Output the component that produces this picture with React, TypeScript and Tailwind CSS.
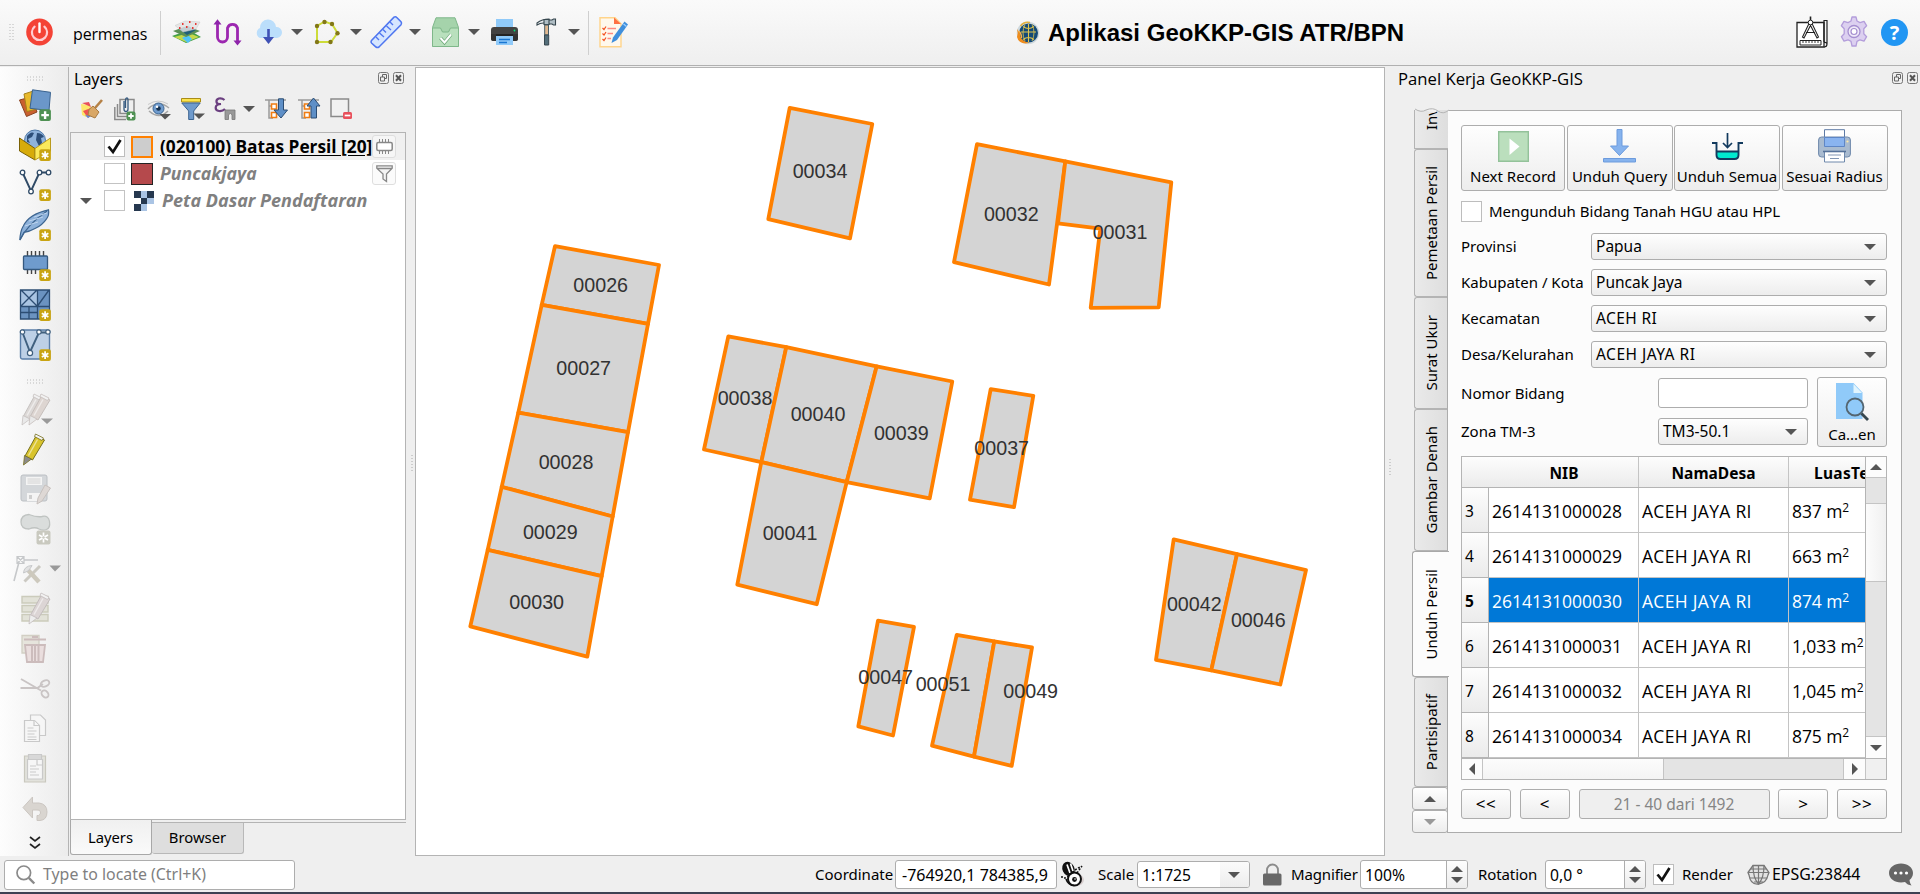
import React from "react";

type Kids = { children?: React.ReactNode };

/* ---------- small shared pieces ---------- */

function Ico({ w = 32, h = 32, vb, cls = "", children }: Kids & { w?: number; h?: number; vb?: string; cls?: string }) {
  return (
    <svg width={w} height={h} viewBox={vb ?? `0 0 ${w} ${h}`} className={`block shrink-0 overflow-visible ${cls}`} fill="none">
      {children}
    </svg>
  );
}

function Tri({ cls = "", up = false, color = "#555" }: { cls?: string; up?: boolean; color?: string }) {
  return (
    <Ico w={12} h={6} cls={cls}>
      <path d={up ? "M0 6 6 0l6 6z" : "M0 0h12L6 6z"} fill={color} />
    </Ico>
  );
}

function Check() {
  return (
    <Ico w={19} h={19}>
      <path d="M3.500 9.500 8 15 15.500 3" stroke="#111" strokeWidth="2.700" />
    </Ico>
  );
}

function DockButtons() {
  return (
    <div className="flex gap-[4px]">
      <Ico w={11} h={12}>
        <rect x=".5" y=".5" width="10" height="11" rx="2" stroke="#777" />
        <path d="M4.500 5V2.500h4v4H6.500M2.500 5h4v4h-4z" stroke="#666" />
      </Ico>
      <Ico w={11} h={12}>
        <rect x=".5" y=".5" width="10" height="11" rx="2" stroke="#777" />
        <path d="m3 3.300 5 5.400M8 3.300 3 8.700" stroke="#555" strokeWidth="2" />
      </Ico>
    </div>
  );
}

const Star = () => (
  <g>
    <rect x="20.300" y="20.300" width="11.600" height="11.600" rx="2" fill="#c9a412" />
    <path d="M26.100 22.300v7.600M22.800 24.200l6.600 3.800M29.400 24.200l-6.600 3.800" stroke="#fff" strokeWidth="1.700" />
  </g>
);

/* ---------- top toolbar ---------- */

function TopBar() {
  return (
    <header className="flex h-[66px] shrink-0 items-start border-b border-[#b0b0b0] bg-gradient-to-b from-[#fafafa] to-[#efefef] pt-[16px]">
      <Ico w={5} h={18} cls="mt-[8px] ml-[9px]">
        <path d="M1 0v18M4 0v18" stroke="#b8b8b8" strokeWidth="1" strokeDasharray="1 2" />
      </Ico>
      <Ico w={27} h={28} cls="mt-[2px] ml-[12px]">
        <ellipse cx="13.500" cy="14" rx="13.300" ry="13.600" fill="#f44336" />
        <path d="M8.600 8.600a7.600 7.600 0 1 0 9.800 0" stroke="#ffcdd2" strokeWidth="2.200" strokeLinecap="round" />
        <path d="M13.500 5.500v8.500" stroke="#fff" strokeWidth="2.400" strokeLinecap="round" />
      </Ico>
      <span className="mt-[5px] ml-[20px] w-[88px] font-['Open_Sans',sans-serif] text-[16px] leading-[26px] tracking-[-0.150px]">permenas</span>
      <div className="-mt-[5px] -ml-px h-[44px] w-px bg-[#cfcfcf]" />
      <Ico w={29} h={26} cls="mt-[3px] ml-[11px]">
        <path d="M0 17 17 11l12 7-15 6z" fill="#43a047" />
        <path d="M2 18 17 14l10 4-13 5z" fill="#c6d84a" />
        <path d="m10 19 6-3 4 4-4 4z" fill="#4fc3f7" />
        <path d="M1 12 15 7l13 5-14 6z" fill="#5b8f55" />
        <path d="m7 10 9-3 8 4-9 5z" fill="#1f5f7a" />
        <path d="M3 6.500 13 2l15 1-4 7-13 3z" fill="#e3e3e3" fillOpacity=".85" stroke="#c9c9c9" strokeWidth=".5" />
        <path d="M10 5h1.500M17 3h1.500M23 5h1.500M14 8h1.500M20 9h1.500M7 9h1.500" stroke="#e53935" strokeWidth="1.800" />
      </Ico>
      <Ico w={29} h={28} cls="mt-[3px] ml-[12px]">
        <path d="M4.500 3v15a5 5 0 0 0 10 0V9a5.300 5.300 0 0 1 10 0v14" stroke="#9c27b0" strokeWidth="2.800" />
        <path d="M.5 5.500 4.500.2l4 5.300zM20.500 21.500h8l-4 5z" fill="#8e24aa" />
      </Ico>
      <Ico w={27} h={26} cls="mt-[4px] ml-[13px]">
        <path d="M5 18a5.500 5.500 0 0 1 0-10 8 8 0 0 1 16-1 5.500 5.500 0 0 1 1 11z" fill="#bbdefb" />
        <path d="M13.500 9v10" stroke="#3f51b5" strokeWidth="2.600" />
        <path d="M8 17h11l-5.500 7z" fill="#3f51b5" />
      </Ico>
      <Tri cls="mt-[13px] ml-[9px]" />
      <Ico w={25} h={26} cls="mt-[4px] ml-[12px]">
        <path d="M2 22V6l7.500-4.500L17 4l5.500 9-6.500 9z" stroke="#cddc39" strokeWidth="2" />
        <g fill="#827717">
          <circle cx="2" cy="6" r="2.200" /><circle cx="9.500" cy="2" r="2.200" /><circle cx="17" cy="4" r="2.200" />
          <circle cx="22.500" cy="13.300" r="2.200" /><circle cx="15.500" cy="22" r="2.200" /><circle cx="2" cy="22" r="2.200" />
        </g>
      </Ico>
      <Tri cls="mt-[13px] ml-[10px]" />
      <Ico w={33} h={32} cls="ml-[8px]">
        <path d="M1.500 24.500 24 1.200q1.500-1 3 .5l4 4q1.200 1.500 0 3L9 31q-1.500 1-3 0l-4.500-4q-1-1 0-2.500z" fill="#d6e6ff" stroke="#5077f0" strokeWidth="1.600" />
        <path d="m6 21 3 3M9.500 17l4.500 4M13 13.500l3 3M16.500 10l4.500 4M20 6l3 3" stroke="#5077f0" strokeWidth="1.400" />
      </Ico>
      <Tri cls="mt-[13px] ml-[6px]" />
      <Ico w={27} h={31} cls="mt-[1px] ml-[11px]">
        <path d="M.5 10.500 4 .8h19l3.500 9.700v18.700H.5z" fill="#a5d3ab" stroke="#7fb78a" />
        <path d="M.5 11h8l2 4h6l2-4h8v18.500H.5z" fill="#b9e0bd" stroke="#7fb78a" />
        <path d="m8.500 21 4 4.500 6.500-8" stroke="#6fa87a" strokeWidth="3.500" />
        <path d="m8.500 21 4 4.500 6.500-8" stroke="#fff" strokeWidth="2" />
      </Ico>
      <Tri cls="mt-[13px] ml-[9px]" />
      <Ico w={27} h={27} cls="mt-[3px] ml-[11px]">
        <path d="M5 0h17v9H5z" fill="#90caf9" />
        <rect y="8" width="27" height="14" rx="3" fill="#424242" />
        <path d="M0 15h27v5q0 2-2 2H2q-2 0-2-2z" fill="#333" />
        <path d="M5 15h17v11H5z" fill="#90caf9" />
        <path d="M5 15h17v2H5z" fill="#242424" />
        <path d="M8 20.500h11M8 23.500h8" stroke="#1976d2" strokeWidth="1.500" />
        <circle cx="23.500" cy="11.500" r=".9" fill="#00e676" />
      </Ico>
      <Ico w={20} h={28} cls="mt-[2px] ml-[18px]">
        <path d="M1 5q5-4 12-4v5Q6 3.500 1 7z" fill="#eceff1" stroke="#37474f" strokeWidth="1.100" />
        <path d="M8 1.500h5v5H8zM13 2h3l1.500-1h2v6h-2L16 6h-3z" fill="#b0bec5" stroke="#37474f" strokeWidth="1.100" />
        <path d="M8.700 7h3.800v10H8.700z" fill="#e0b890" stroke="#455a64" />
        <path d="M8.500 17h4.200v10H8.500z" fill="#546e7a" stroke="#37474f" />
      </Ico>
      <Tri cls="mt-[13px] ml-[12px]" />
      <div className="-mt-[5px] ml-[8px] h-[44px] w-px bg-[#cfcfcf]" />
      <Ico w={30} h={31} cls="mt-[1px] ml-[10px]">
        <path d="M1 .8h15l6 6v23H1z" fill="#fff8ec" stroke="#ffd48a" strokeWidth="1.400" />
        <path d="M15 .5 22 7h-7z" fill="#ff7043" />
        <path d="m3.500 11 1.500 1.500L7 9.500M3.500 16.500 5 18l2-3M3.500 22 5 23.500l2-3" stroke="#f4511e" strokeWidth="1.200" />
        <path d="M8.500 11.500H17M8.500 16.500H14M8.500 21.500H12" stroke="#ff8a80" strokeWidth="1.500" />
        <path d="M25.500 4.500 29 7.500 18 23l-5.500 3 1.500-5.500z" fill="#3f8fdc" />
        <path d="m24.500 7 3 2.500" stroke="#9fd0ff" strokeWidth="1.200" />
      </Ico>
      <div className="ml-[387px] flex">
        <Ico w={23} h={24} cls="mt-[5px]">
          <circle cx="12" cy="12" r="11.300" fill="#cfd8dc" />
          <circle cx="12.500" cy="12" r="9.500" fill="#134a78" />
          <path d="M5 11h15M12.500 3v18M7 5.500q5.500 4 11 0M7 18.500q5.500-4 11 0" stroke="#e2c64e" strokeWidth="1.100" />
          <path d="M9 3.500q-4 8 0 16.500M16 3.500q4 8 0 16.500" stroke="#e2c64e" strokeWidth=".8" />
          <path d="M4.500 5Q8 0 14 1.500" stroke="#e2b23e" strokeWidth="1.500" />
          <path d="M1 8q4 5 3.500 8 2 4.500 9 6-10.500 2-12.500-6 1.500-4 0-8z" fill="#ef8c1c" />
          <path d="M3 10q3 4 2.500 7" stroke="#f8b24a" strokeWidth="1.300" />
        </Ico>
        <h1 className="ml-[9px] w-[748px] font-['Liberation_Sans',sans-serif] text-[24px] leading-[34px] font-bold whitespace-nowrap">
          Aplikasi GeoKKP-GIS ATR/BPN
        </h1>
      </div>
      <Ico w={32} h={33}>
        <path d="M1 6.500h27V31H1z" fill="#fff" stroke="#222" strokeWidth="1.300" />
        <path d="M28 31q3 0 3-3V4.500h-3V26M28 26.500q3-.5 3 2" stroke="#222" strokeWidth="1.200" />
        <path d="M4 24.500h21v4.500H4z" fill="#fff" stroke="#222" />
        <path d="M7 24.500v2.500M10 24.500v2.500M13 24.500v2.500M16 24.500v2.500M19 24.500v2.500M22 24.500v2.500" stroke="#222" strokeWidth=".9" />
        <path d="M13 7.500 6.500 21l1.500 1 6.500-12.500L21 22l1.500-1L16 7.500zM10 16.500h9" fill="#fff" stroke="#222" strokeWidth="1.100" />
        <circle cx="14.500" cy="6.500" r="2.300" fill="#fff" stroke="#222" />
        <path d="M14.500 4V.5" stroke="#222" strokeWidth="1.600" />
      </Ico>
      <Ico w={28} h={32} cls="ml-[12px]">
        <path
          d="M12 1h4l1 4 3 1.600 4-1.300 2.600 4.400-2.800 3v5l2.800 3-2.600 4.400-4-1.300-3 1.600-1 4.600h-4l-1-4.600-3-1.600-4 1.300-2.600-4.400 2.800-3v-5l-2.800-3L4 5.300l4 1.300L11 5z"
          fill="#dcd0f0" stroke="#b39ddb" strokeWidth="1.300" strokeLinejoin="round"
        />
        <circle cx="14" cy="15.500" r="6" fill="#f0eaf8" stroke="#a58fd0" strokeWidth="1.300" />
        <circle cx="14" cy="15.500" r="3" fill="#fff" stroke="#a58fd0" strokeWidth="1.200" />
      </Ico>
      <div className="mt-[3px] ml-[13px] flex h-[27px] w-[27px] items-center justify-center rounded-full bg-[#2196f3] font-['Open_Sans',sans-serif] text-[20px] font-bold text-white">
        ?
      </div>
    </header>
  );
}

/* ---------- left vertical toolbar ---------- */

const slots: React.ReactNode[] = [
  <g key="a">
    <path d="M.5 11 12 8l6 15-10.500 4.500z" fill="#c9602f" stroke="#8a4220" />
    <path d="m5 5 11-3.500 4 18-12 3z" fill="#e8b92c" stroke="#a5821b" />
    <path d="m13.500.8 18 2.500L30 21.500l-19-2.200z" fill="#6b97c9" stroke="#3a6390" />
    <rect x="20.300" y="20.300" width="11.600" height="11.600" rx="2" fill="#4f9153" />
    <path d="M26.100 22.300v7.600M22.300 26.100h7.600" stroke="#fff" strokeWidth="2.400" />
  </g>,
  <g key="b">
    <circle cx="16" cy="11.500" r="10.500" fill="#8fb3dc" stroke="#4f79a8" />
    <path d="M8 7q4-5 7-3l-2 4-4 2 2 4-3-1zM18 4q5 0 7 4l-3 1 1 5-3 3-3-6z" fill="#2d4f7a" />
    <path d="M.5 9 16 19.500V31L.5 22z" fill="#d7ab0a" stroke="#7a6105" />
    <path d="M16 19.500 31.500 9v13L16 31z" fill="#fbe95b" stroke="#b99a1d" />
    <Star />
  </g>,
  <g key="c">
    <path d="M3.500 3.500 12 22 20.500 3.500H30" stroke="#2f4a66" strokeWidth="1.900" />
    <g fill="#fff" stroke="#2f4a66" strokeWidth="1.300">
      <circle cx="3.500" cy="3.500" r="2.300" /><circle cx="20.500" cy="3.500" r="2.300" /><circle cx="29.500" cy="3.500" r="2.300" /><circle cx="12" cy="22.500" r="2.300" />
    </g>
    <Star />
  </g>,
  <g key="d">
    <path d="M.8 31q.5-9 3.500-14Q10 5 29.500.8q1 5-2 9-4 6-11 9.500-6 3.500-11.500 4z" fill="#8db1da" stroke="#3d6590" strokeWidth="1.200" />
    <path d="M1 31Q8 16 28 2" stroke="#3d6590" strokeWidth="1.200" />
    <path d="m6 17 13-4M10 12l14-4M15 8l13-4" stroke="#bdd4ee" strokeWidth="1" />
    <Star />
  </g>,
  <g key="e">
    <path d="M8.500 2v5M12.500 2v5M16.500 2v5M20.500 2v5M24.500 2v5M8.500 20v5M12.500 20v5M16.500 20v5" stroke="#444" strokeWidth="1.400" />
    <rect x="4.500" y="7" width="24" height="13.500" rx="1" fill="#6f9bcd" stroke="#35597f" strokeWidth="1.300" />
    <Star />
  </g>,
  <g key="f">
    <path d="M1.500 1h29v29h-29z" fill="#6b93c0" />
    <path d="M1.500 1h17v16.500h-17z" fill="#a9c4e2" />
    <path d="M1.500 1h29v29h-29zM1.500 17.500h29M18.500 1v16.500M2 1l16 16M18 1 2 17M30 1 18.500 17M10 17.500V30M1.500 23.500h17M18.500 17.500V30" stroke="#2c4d73" strokeWidth="1.300" />
    <Star />
  </g>,
  <g key="g">
    <rect x="1.500" y="1" width="29" height="29" rx="2" fill="#bdd0e6" stroke="#5a7ea8" strokeWidth="1.400" />
    <path d="M3.500 3.500 11 23 20 3.500h10" stroke="#40607f" strokeWidth="1.900" />
    <g fill="#fff" stroke="#40607f" strokeWidth="1.200">
      <circle cx="3.500" cy="3" r="2.200" /><circle cx="20" cy="3" r="2.200" /><circle cx="29" cy="3" r="2.200" /><circle cx="11" cy="24" r="2.600" />
    </g>
    <Star />
  </g>,
];

const Pencil = ({ body, edge, tip }: { body: string; edge: string; tip: string }) => (
  <g>
    <path d="M18.500 3 27 7l-12 20-7.500-4z" fill={body} stroke={edge} strokeWidth="1" />
    <path d="m18 1 8 4-1.500 2.500L17 3.500z" fill="#f2f2f2" stroke={edge} strokeWidth=".8" />
    <path d="M7 22.500 14 26 6 32z" fill={tip} stroke={edge} strokeWidth=".8" />
    <path d="M20 6.500 11 22.500" stroke="#fff" strokeOpacity=".5" strokeWidth="1.500" />
  </g>
);

const slots2: React.ReactNode[] = [
  <g key="h">
    <g transform="translate(-3 0)"><Pencil body="#dcd8d6" edge="#c6c2c0" tip="#e9e9e9" /></g>
    <g transform="translate(4 0)"><Pencil body="#ddd5d1" edge="#c6bfbc" tip="#e9e9e9" /></g>
    <path d="M22 25.500h12L28 31z" fill="#999" />
  </g>,
  <g key="i" transform="translate(-1.500 0)"><Pencil body="#d9c42c" edge="#77701f" tip="#8b8b8b" /></g>,
  <g key="j">
    <rect x="2" y="2" width="26" height="26" rx="2" fill="#d4d7da" stroke="#bcc0c4" />
    <path d="M7 4h16v8H7zM8 20h15v8H8z" fill="#f4f4f4" />
    <path d="M8.500 6h13M8.500 8h13M8.500 10h13" stroke="#ccc" strokeWidth=".8" />
    <path d="M10 22h3v4h-3z" fill="#cfcfcf" />
    <path d="m26 12 5.500 3-8.500 13-5 3 1-6z" fill="#ded8d5" stroke="#c7c1be" />
  </g>,
  <g key="k">
    <path d="M10 1.500q-8 .5-8 7.500t8 7q6-2.500 10 0 4 2 7.500.5 4-1.500 3-8T23 3.500q-5 1-13-2z" fill="#dadddc" stroke="#bfc3c1" strokeWidth="1.300" />
    <rect x="17.500" y="17.500" width="14" height="14" rx="2" fill="#c9c9bf" />
    <path d="M24.500 19.500v10M20 22l9 5M29 22l-9 5" stroke="#fff" strokeWidth="1.700" />
    <circle cx="24.500" cy="24.500" r="1.300" fill="#c9c9bf" />
  </g>,
  <g key="l" stroke="#c6c8ca" strokeWidth="1.600">
    <path d="M-5 28 0 9M5 7h14" />
    <path d="M-2 3.500h7v7h-7zM-2 3.500l7 7M5 3.500l-7 7" strokeWidth="1.200" />
    <path d="M5.500 28.500 21 13" stroke="#cbc9c2" strokeWidth="3" />
    <path d="m9 17 11 12" stroke="#cdc9bd" strokeWidth="4.500" />
    <path d="M4.500 20Q5 13 13 12.500L11.500 15 9 18z" fill="#e2e2e2" strokeWidth="1" />
    <path d="M30.500 12.500h11.500l-6 6z" fill="#999" stroke="none" />
  </g>,
  <g key="m">
    <path d="M3 3.500h26v6.500H3zM3 12.500h26V19H3zM3 21.500h26V28H3z" fill="#e2e2d8" stroke="#cbcbbb" strokeWidth="1.400" />
    <g transform="translate(4 -1)"><Pencil body="#dcd5d5" edge="#c3bdbd" tip="#eee" /></g>
  </g>,
  <g key="n">
    <path d="M3 2.500h17V20H3z" fill="#e6e4dc" stroke="#d2cfc4" strokeWidth="1.300" />
    <path d="M6 12h20l-2 17H8z" fill="#eadede" stroke="#ccbcbc" strokeWidth="1.800" />
    <path d="M5 6.500h22M13 4h6M13 13v15M16 13v15M19.500 13v15" stroke="#ccbcbc" strokeWidth="2" />
  </g>,
  <g key="o" stroke="#c9c4c4" strokeWidth="1.900">
    <path d="M2 6 22 17.500M1.500 15h17L24 11" />
    <ellipse cx="26" cy="10.500" rx="4.500" ry="3" transform="rotate(-25 26 10.500)" />
    <ellipse cx="26" cy="21" rx="4" ry="3" transform="rotate(50 26 21)" />
  </g>,
  <g key="p" fill="#f6f6f6" stroke="#c9c9c9" strokeWidth="1.200">
    <path d="M11.500 2h10l5 5v15.500h-15z" />
    <path d="M5.500 7.500h10l5 5v16h-15z" />
    <path d="M15 7.500v5h5M8.500 15h6M8.500 18h9M8.500 21h7M8.500 24h9M8.500 26.500h9" />
  </g>,
  <g key="q" fill="#f6f6f6" stroke="#c9c9c9" strokeWidth="1.200">
    <path d="M5.500 3h21v26h-21z" fill="#e2e2dc" stroke="#c9c8be" />
    <path d="M8.500 6.500h15v19.500h-15z" />
    <path d="M9.500 1.500h13v5h-13z" fill="#d8d8d8" />
    <path d="M18 7v5h5M11 13h6M11 16h9M11 19h6M11 22h9" />
  </g>,
  <g key="r">
    <path d="M4 14.500 13.500 4v6H20q8 1 8 9t-7 8.500h-3v-5h1.500q2.500-1 2-3.500t-3.500-2h-4.500v8z" fill="#d9d5d0" stroke="#cbc6c1" />
  </g>,
];

function LeftTools() {
  return (
    <aside className="mt-px flex w-[69px] shrink-0 flex-col border-r border-[#b4b4b4] bg-gradient-to-r from-[#fdfdfd] to-[#ececec] pt-[9px]">
      <div className="flex h-[9px] justify-center pl-[3px]">
        <Ico w={17} h={5}>
          <path d="M0 1h17M0 4h17" stroke="#bbb" strokeDasharray="1 2" />
        </Ico>
      </div>
      {slots.map((s, i) => (
        <div key={i} className="flex h-[40px] items-center pl-[19px]"><Ico>{s}</Ico></div>
      ))}
      <div className="flex h-[24px] items-center justify-center pt-[9px] pl-[3px]">
        <Ico w={17} h={5}>
          <path d="M0 1h17M0 4h17" stroke="#bbb" strokeDasharray="1 2" />
        </Ico>
      </div>
      {slots2.map((s, i) => (
        <div key={i} className="flex h-[40px] items-center pl-[19px]"><Ico>{s}</Ico></div>
      ))}
      <Ico w={10} h={14} cls="mt-[7px] ml-[30px]">
        <path d="m0 1 5 4 5-4M0 8l5 4 5-4" stroke="#222" strokeWidth="1.700" />
      </Ico>
    </aside>
  );
}

/* ---------- layers dock ---------- */

function LayersDock() {
  return (
    <section className="flex w-[337px] shrink-0 flex-col pt-[2px]">
      <div className="flex h-[26px] justify-between pr-[2px] pl-[5px]">
        <span className="text-[16px] leading-[22px]">Layers</span>
        <div className="pt-[4px]"><DockButtons /></div>
      </div>
      <div className="flex h-[38px] items-start pt-[3px]">
        <Ico w={22} h={22} cls="mt-[2px] ml-[12px]">
          <path d="m0 5 8 1 5 6-8 6-4-2z" fill="#fde66b" />
          <path d="m1 4 7-1 2 5z" fill="#e8505b" />
          <path d="m2 12 8-3 3 5-6 5z" fill="#ef5350" />
          <path d="m4 16 6 1-3 2z" fill="#5b8dd6" />
          <path d="M8 10.500 12 7l6 6-4 6-7-3z" fill="#d9a766" stroke="#a97b42" />
          <path d="m14 9 7-8" stroke="#b58146" strokeWidth="2.600" />
        </Ico>
        <Ico w={22} h={24} cls="ml-[11px]">
          <path d="M6 2.500h14v14H6z" stroke="#8a8a8a" strokeWidth="1.500" />
          <path d="M3.500 7v12.500H16M.8 10v12.500H12" stroke="#8a8a8a" strokeWidth="1.500" />
          <path d="M10 4v8q0 2.500 2 2.500t2-2.500V3q0-2-1.200-2T11.500 3v8" stroke="#35597f" strokeWidth="1.300" />
          <rect x="12.500" y="14.500" width="9" height="9" rx="2" fill="#4f9153" />
          <path d="M17 16.300v5.400M14.300 19h5.400" stroke="#fff" strokeWidth="1.800" />
        </Ico>
        <Ico w={25} h={20} cls="mt-[4px] ml-[11px]">
          <path d="M1 8q10-10 21-1M2 10q10 9 19 0" stroke="#a6a6a6" strokeWidth="1.500" />
          <path d="M1 3.500Q11-3 21 3" stroke="#c9c9c9" />
          <circle cx="11.500" cy="7.500" r="5.500" fill="#6f9bcd" stroke="#3a6390" />
          <circle cx="11.500" cy="7.500" r="2.300" fill="#16304d" /><circle cx="10" cy="5.800" r="1.300" fill="#fff" />
          <path d="M12.500 13H24l-6 5.500z" fill="#555" />
        </Ico>
        <Ico w={24} h={23} cls="mt-px ml-[9px]">
          <path d="M.5.5h19v3.500H.5z" fill="#fbe34d" stroke="#a98c17" />
          <path d="M.8 5h18.400l-6.500 8v8.500h-5V13z" fill="#6f9bcd" stroke="#3a6390" />
          <path d="M12.500 15.500H24L18 21z" fill="#555" />
        </Ico>
        <div className="mt-[-1px] ml-[9px] flex h-[25px] w-[22px] items-start">
          <Ico w={22} h={24}>
            <path d="M10.500 4Q8 1.800 4.800 2.500 2 3.500 2.500 6T7 8q-5 .2-5.300 3.400T5 15t6-2" stroke="#6b3f80" strokeWidth="2.200" />
            <path d="M11 23.500V14h10v9.500h-3V19l-1.500-2L14.500 19v4.500z" fill="#999" stroke="#777" strokeWidth=".8" />
          </Ico>
        </div>
        <Tri cls="mt-[9px] ml-[7px]" />
        <Ico w={22} h={22} cls="mt-px ml-[10px]">
          <path d="M0 2h21M4 2v18h4M4 8h4" stroke="#9a9a9a" strokeWidth="1.500" />
          <path d="M6.500 6h5v5h-5zM6.500 14.500h5v5h-5z" fill="#fff" stroke="#f07d13" strokeWidth="1.600" />
          <path d="M13.500.8h5V12h4L16 20 9 12h4.500z" fill="#5e8fc7" stroke="#2c4d73" />
        </Ico>
        <Ico w={22} h={22} cls="mt-px ml-[11px]">
          <path d="M0 2h21M4 2v18h4M4 8h4" stroke="#9a9a9a" strokeWidth="1.500" />
          <path d="M6.500 6h5v5h-5zM6.500 14.500h5v5h-5z" fill="#fff" stroke="#f07d13" strokeWidth="1.600" />
          <path d="M13 20h5.500V8H22L15.500 0 9 8h4z" fill="#5e8fc7" stroke="#2c4d73" />
        </Ico>
        <Ico w={22} h={22} cls="mt-px ml-[10px]">
          <path d="M1 1h17.500v17.500H1z" fill="#f1f1f1" stroke="#8a8a8a" strokeWidth="1.500" />
          <rect x="13" y="14" width="9" height="7" rx="1.500" fill="#e8505b" />
          <path d="M14.700 17.500h5.600" stroke="#fff" strokeWidth="1.700" />
        </Ico>
      </div>

      <div className="ml-px h-[688px] border border-[#b4b4b4] bg-white font-['Open_Sans',sans-serif] text-[17.300px] font-bold">
        <div className="flex h-[27px] items-center bg-[#f0f0f0] pl-[33px]">
          <div className="h-[21px] w-[21px] border border-[#bdbdbd] bg-white"><Check /></div>
          <div className="ml-[6px] h-[22px] w-[22px] border-2 border-[#ff8000] bg-[#cdcdcd]" />
          <span className="ml-[7px] w-[212px] whitespace-nowrap underline underline-offset-2">(020100) Batas Persil [20]</span>
          <div className="flex h-[23px] w-[24px] items-center justify-center rounded-[3px] border border-[#dedede] bg-[#f6f6f6]">
            <Ico w={17} h={15}>
              <path d="M3.500 0v4M6.500 0v4M9.500 0v4M12.500 0v4M3.500 11v4M6.500 11v4M9.500 11v4M12.500 11v4" stroke="#888" />
              <rect x=".8" y="3.500" width="15.400" height="8" rx="1.500" fill="#fff" stroke="#888" strokeWidth="1.500" />
            </Ico>
          </div>
        </div>
        <div className="flex h-[27px] items-center pl-[33px] text-[#808080] italic">
          <div className="h-[21px] w-[21px] border border-[#c3c3c3] bg-white" />
          <div className="ml-[6px] h-[22px] w-[22px] border border-[#232323] bg-[#b5494c]" />
          <span className="-mt-px ml-[7px] w-[212px] text-[17.700px]">Puncakjaya</span>
          <div className="flex h-[23px] w-[24px] items-center justify-center rounded-[3px] border border-[#dedede] bg-[#fbfbfb]">
            <Ico w={17} h={17}>
              <path d="M.8.800h15.400v2.500L10.500 9v7.500L7 14V9L.8 3.300zM.8 3.500h15.400" fill="#f4f4f4" stroke="#888" strokeWidth="1.300" />
            </Ico>
          </div>
        </div>
        <div className="flex h-[27px] items-center pl-[9px] text-[#808080] italic">
          <Tri color="#555" />
          <div className="ml-[12px] h-[21px] w-[21px] border border-[#c3c3c3] bg-white" />
          <Ico w={20} h={20} cls="ml-[9px]">
            <path d="M0 0h20v20H0z" fill="#aac4e4" />
            <path d="M0 0h7v7H0zM13 0h7v7h-7zM7 7h6v6H7zM0 13h7v7H0z" fill="#26384f" />
            <path d="M0 7h7v6H0zM13 13h7v7h-7z" fill="#fff" />
          </Ico>
          <span className="-mt-px ml-[8px] text-[18px] whitespace-nowrap">Peta Dasar Pendaftaran</span>
        </div>
      </div>
      <div className="flex pl-px">
        <div className="h-[35px] w-[82px] rounded-b-[3px] border-x border-b border-[#a8a8a8] bg-gradient-to-b from-[#f0f0f0] to-[#fafafa] pr-px text-center text-[14.800px] leading-[34px]">
          Layers
        </div>
        <div className="mt-[2px] flex-1 border-t border-[#b4b4b4]">
          <div className="h-[31px] w-[92px] rounded-b-[3px] border-r border-b border-[#b8b8b8] bg-[#dedede] text-center text-[14.800px] leading-[28px]">
            Browser
          </div>
        </div>
      </div>
    </section>
  );
}

/* ---------- map ---------- */

const parcels: string[] = [
  "789.7,107.8 872.3,124 850,238.300 768.3,219.100",
  "555,246.100 659,265 648,323.800 541.700,304.900",
  "541.700,304.900 648,323.800 628,432.200 518.300,412.600",
  "518.300,412.600 628,432.200 612.700,516.500 501.700,486.900",
  "501.700,486.900 612.700,516.500 601.700,576.100 487.700,549.800",
  "487.700,549.800 601.700,576.100 587.300,656.700 470.300,626.400",
  "728.300,336.400 786.300,347.100 761.300,462.100 704,449.500",
  "786.300,347.100 876.700,366.300 846.700,482.100 761.300,462.100",
  "876.700,366.300 952.300,381.500 929.700,498.400 846.700,482.100",
  "761.300,462.100 846.700,482.100 816.700,604.200 737.300,584.600",
  "977,144.100 1065.300,161.300 1049,284.500 954,262.100",
  "1065.300,161.300 1171.300,182.400 1158.700,307.400 1090.700,307.800 1100.300,228.600 1058,223.300",
  "990.700,389.200 1033.300,395.800 1014,507.200 970,499.700",
  "1173.700,539.300 1237,554.200 1211.300,670.400 1156,659.900",
  "1237,554.200 1306,570.100 1280.300,684.500 1211.300,670.400",
  "878,620.700 914,626.900 893,735.500 858.300,726.300",
  "956.700,634.800 994.300,641.400 974,756.700 932,745.700",
  "994.300,641.400 1032,647.500 1011.700,765.900 974,756.700",
];

const labels: [string, number, number][] = [
  ["00034", 820, 178.3], ["00026", 600.7, 291.500], ["00027", 583.7, 375.400], ["00028", 566, 469],
  ["00029", 550.3, 538.900], ["00030", 536.7, 609.400], ["00038", 745, 405], ["00040", 818, 420.500],
  ["00039", 901.3, 439.800], ["00041", 790, 539.700], ["00032", 1011.3, 220.600], ["00031", 1120, 238.500],
  ["00037", 1001.7, 454.700], ["00042", 1194.3, 611], ["00046", 1258.3, 626.800], ["00047", 885.7, 684.400],
  ["00051", 943, 690.500], ["00049", 1030.7, 698.100],
];

function MapCanvas() {
  return (
    <main className="mt-px h-[789px] w-[970px] shrink-0 border border-[#b4b4b4] bg-white">
      <svg width="968" height="787" viewBox="416 68 968 787" className="block">
        <g fill="#d4d4d4" stroke="#ff8000" strokeWidth="3.800" strokeLinejoin="round">
          {parcels.map((p) => <polygon key={p} points={p} />)}
        </g>
        <g className="font-['Liberation_Sans',sans-serif] text-[19.700px]" fill="#323232" textAnchor="middle">
          {labels.map(([t, x, y]) => <text key={t} x={x} y={y}>{t}</text>)}
        </g>
      </svg>
    </main>
  );
}

/* ---------- right dock ---------- */

function SideTab({ cls, children }: Kids & { cls: string }) {
  return (
    <div className={`ml-[2px] flex w-[34px] items-center justify-center overflow-hidden rounded-l-[3px] border border-r-0 border-[#b4b4b4] bg-gradient-to-r from-[#eaeaea] to-[#dedede] ${cls}`}>
      <span className="rotate-180 pl-px text-[15px] leading-[20px] whitespace-nowrap [writing-mode:vertical-rl]">{children}</span>
    </div>
  );
}

const btn = "rounded-[3px] border border-[#adadad] bg-gradient-to-b from-[#fefefe] to-[#ededed]";

function BigButton({ cls, label, children }: Kids & { cls: string; label: string }) {
  return (
    <button className={`flex h-[66px] flex-col items-center text-[15px] leading-[20px] whitespace-nowrap ${btn} ${cls}`}>
      <span className="flex h-[40px] items-center justify-center">{children}</span>
      {label}
    </button>
  );
}

function Field({ label, value, cls = "" }: { label: string; value: string; cls?: string }) {
  return (
    <div className="mb-[9px] flex h-[27px] items-center">
      <span className="w-[130px] text-[15px] whitespace-nowrap">{label}</span>
      <div className={`flex h-[27px] w-[296px] items-center justify-between pr-[10px] pl-[4px] text-[15.500px] ${btn}`}>
        <span className={cls}>{value}</span>
        <Tri />
      </div>
    </div>
  );
}

const rows: [string, string, string][] = [
  ["3", "2614131000028", "837"],
  ["4", "2614131000029", "663"],
  ["5", "2614131000030", "874"],
  ["6", "2614131000031", "1,033"],
  ["7", "2614131000032", "1,045"],
  ["8", "2614131000034", "875"],
];

function ParcelTable() {
  return (
    <div className="mt-[9px] h-[324px] w-[426px] border border-[#b4b4b4] bg-white">
      <div className="flex h-[301px]">
        <div className="w-[403px] overflow-hidden">
          <div className="flex h-[31px] border-b border-[#b4b4b4] bg-gradient-to-b from-[#fdfdfd] to-[#ebebeb] text-center text-[15.500px] leading-[33px] font-bold">
            <div className="w-[177px] shrink-0 border-r border-[#c4c4c4] pl-[28px]">NIB</div>
            <div className="w-[150px] shrink-0 border-r border-[#c4c4c4]">NamaDesa</div>
            <div className="w-[76px] shrink-0 overflow-hidden pl-[25px] text-left tracking-[0.300px]">LuasTertulis</div>
          </div>
          {rows.map(([n, nib, area]) => {
            const sel = n === "5";
            return (
              <div key={n} className="flex h-[45px] w-[460px] text-[17.500px] leading-[46px]">
                <div className={`w-[27px] border-r border-b border-[#b4b4b4] bg-gradient-to-b from-[#fdfdfd] to-[#ebebeb] pl-[3px] text-[15.500px] ${sel ? "font-bold" : ""}`}>{n}</div>
                <div className={`flex flex-1 font-['Open_Sans',sans-serif] ${sel ? "bg-[#0078d7] text-white" : ""}`}>
                  <div className="w-[150px] border-r border-b border-[#c4c4c4] pl-[3px]">{nib}</div>
                  <div className="w-[150px] border-r border-b border-[#c4c4c4] pl-[3px] tracking-[0.300px]">ACEH JAYA RI</div>
                  <div className="flex-1 border-b border-[#c4c4c4] pl-[3px] tracking-[-0.100px] whitespace-nowrap">
                    {area} m<span className="relative -top-[6px] text-[12px] leading-none">2</span>
                  </div>
                </div>
              </div>
            );
          })}
        </div>
        <div className="flex w-[21px] flex-col border-l border-[#b4b4b4] bg-[#e4e4e4]">
          <div className="flex h-[21px] items-center justify-center border-b border-[#c4c4c4] bg-[#fcfcfc]"><Tri up /></div>
          <div className="h-[25px]" />
          <div className="h-[79px] border-y border-[#c4c4c4] bg-gradient-to-r from-[#fcfcfc] to-[#f0f0f0]" />
          <div className="flex-1" />
          <div className="flex h-[22px] items-center justify-center border-t border-[#c4c4c4] bg-[#fcfcfc]"><Tri /></div>
        </div>
      </div>
      <div className="flex h-[21px] border-t border-[#b4b4b4] bg-[#e4e4e4]">
        <div className="flex w-[21px] items-center justify-center border-r border-[#c4c4c4] bg-[#fcfcfc]">
          <Ico w={6} h={12}><path d="M6 0v12L0 6z" fill="#555" /></Ico>
        </div>
        <div className="w-[181px] border-r border-[#c4c4c4] bg-gradient-to-b from-[#fcfcfc] to-[#f4f4f4]" />
        <div className="flex-1" />
        <div className="flex w-[22px] items-center justify-center border-l border-[#c4c4c4] bg-[#fcfcfc]">
          <Ico w={6} h={12}><path d="M0 0v12l6-6z" fill="#555" /></Ico>
        </div>
        <div className="w-[21px] border-l border-[#c4c4c4] bg-[#f0f0f0]" />
      </div>
    </div>
  );
}

function RightDock() {
  const pager = `h-[30px] w-[50px] text-[17px] leading-[28px] tracking-[0.500px] ${btn}`;
  return (
    <section className="flex flex-1 pt-[2px]">
      <Ico w={4} h={18} cls="mt-[391px] ml-[4px]">
        <path d="M1 0v18" stroke="#aaa" strokeDasharray="1 2" />
      </Ico>
      <div className="ml-[5px] flex flex-1 flex-col">
        <div className="flex h-[42px] justify-between pr-[2px]">
          <h2 className="font-['Open_Sans',sans-serif] text-[16.700px] leading-[22px]">Panel Kerja GeoKKP-GIS</h2>
          <div className="pt-[4px]"><DockButtons /></div>
        </div>
        <div className="ml-[14px] flex">
          <div className="flex w-[36px] flex-col">
            <div className="relative ml-[2px] flex h-[39px] w-[34px] items-end justify-center border-b border-l border-[#b4b4b4] bg-gradient-to-r from-[#eaeaea] to-[#dedede] pb-[18px]">
              <span className="rotate-180 pl-px text-[15px] leading-[20px] whitespace-nowrap [writing-mode:vertical-rl]">Inv</span>
              <Ico w={34} h={4} cls="absolute -top-[2px] left-0">
                <path d="M-1-3h35v6q-6-4-11 0t-12-1q-5 3-12-2z" fill="#efefef" />
                <path d="M0 1q6 4 11 1 7-3 12 1t11-1" stroke="#b4b4b4" />
              </Ico>
            </div>
            <SideTab cls="h-[148px]">Pemetaan Persil</SideTab>
            <SideTab cls="h-[112px]">Surat Ukur</SideTab>
            <SideTab cls="h-[142px]">Gambar Denah</SideTab>
            <div className="relative z-10 flex h-[126px] w-[37px] items-center justify-center rounded-l-[3px] border border-r-0 border-[#a8a8a8] bg-[#fcfcfc]">
              <span className="rotate-180 pl-px text-[15px] leading-[20px] whitespace-nowrap [writing-mode:vertical-rl]">Unduh Persil</span>
            </div>
            <SideTab cls="h-[110px]">Partisipatif</SideTab>
            <div className={`flex h-[23px] items-center justify-center ${btn}`}><Tri up /></div>
            <div className={`flex h-[23px] items-center justify-center ${btn}`}><Tri color="#999" /></div>
          </div>
          <div className="-ml-px h-[723px] w-[455px] border border-[#acacac] bg-[#fcfcfc] pt-[14px] pl-[13px]">
            <div className="flex gap-[1.500px]">
              <BigButton cls="w-[104px]" label="Next Record">
                <Ico w={31} h={31}>
                  <path d="M.7.700h29.600v29.600H.7z" fill="#bbdfbd" stroke="#93c29a" strokeWidth="1.400" />
                  <path d="m11.500 7.500 10 8-10 8.500z" fill="#fff" />
                </Ico>
              </BigButton>
              <BigButton cls="w-[106px]" label="Unduh Query">
                <Ico w={33} h={34}>
                  <path d="M14 .5h5v16.500h6.500L16.500 26.500 7.500 17H14zM.5 29.500h32v3.500H.5z" fill="#86b3ee" stroke="#6c9bdd" />
                </Ico>
              </BigButton>
              <BigButton cls="w-[106px]" label="Unduh Semua">
                <Ico w={33} h={28}>
                  <path d="M5.500 19.500h22V26q-1 1-2 1h-18q-2 0-2-2z" fill="#00ead0" />
                  <path d="M1 11h4.500v12q0 4 4 4h14q4 0 4-4V11H32M5.500 19.500h22" stroke="#123a5e" strokeWidth="1.900" />
                  <path d="M16.500 1v14.500M12 11l4.500 4.500L21 11" stroke="#123a5e" strokeWidth="1.700" />
                </Ico>
              </BigButton>
              <BigButton cls="w-[106px]" label="Sesuai Radius">
                <Ico w={33} h={34}>
                  <path d="M6.500.7h20V9h-20z" fill="#fff" stroke="#5e7ba6" />
                  <rect x=".6" y="8" width="31.800" height="20" rx="3" fill="#a9bbd0" stroke="#6e88ab" />
                  <path d="M6.500 8.500h20v9h-20z" fill="#8ab4f0" stroke="#5e86c6" />
                  <path d="M6.500 22.500h20v10.500h-20z" fill="#fff" stroke="#6e88ab" />
                  <path d="M5 22.500h23" stroke="#56729a" strokeWidth="1.600" />
                  <path d="M10 26h13M12 29.500h9" stroke="#8296b3" strokeWidth="1.200" />
                  <circle cx="29.500" cy="12.500" r="1.100" fill="#ffe9a8" />
                </Ico>
              </BigButton>
            </div>
            <div className="mt-[10px] mb-[11px] flex h-[21px] items-center">
              <div className="h-[21px] w-[21px] border border-[#bdbdbd] bg-white" />
              <span className="ml-[7px] text-[15px] whitespace-nowrap">Mengunduh Bidang Tanah HGU atau HPL</span>
            </div>
            <Field label="Provinsi" value="Papua" />
            <Field label="Kabupaten / Kota" value="Puncak Jaya" />
            <Field label="Kecamatan" value="ACEH RI" cls="tracking-[0.400px]" />
            <Field label="Desa/Kelurahan" value="ACEH JAYA RI" cls="tracking-[0.500px]" />
            <div className="flex h-[70px]">
              <div className="w-[197px] text-[15px]">
                <div className="mt-[2px] h-[29px] leading-[28px]">Nomor Bidang</div>
                <div className="mt-[10px] h-[27px] leading-[27px]">Zona TM-3</div>
              </div>
              <div className="w-[150px]">
                <input className="mt-px block h-[30px] w-[150px] rounded-[3px] border border-[#adadad] bg-white" />
                <div className={`mt-[10px] flex h-[27px] items-center justify-between pr-[10px] pl-[4px] text-[15.500px] ${btn}`}>
                  TM3-50.1
                  <Tri />
                </div>
              </div>
              <button className={`ml-[9px] flex h-[70px] w-[70px] flex-col items-center text-[15px] leading-[20px] ${btn}`}>
                <span className="flex h-[46px] items-center pt-[2px]">
                  <Ico w={33} h={38}>
                    <path d="M0 0h17.500l9 9.500V36H0z" fill="#90caf9" />
                    <path d="M17.500 1v9h8.500z" fill="#e1f5fe" />
                    <circle cx="19" cy="24" r="8.500" fill="#90caf9" stroke="#546570" strokeWidth="1.800" />
                    <path d="m25.500 30.500 6.500 6.500" stroke="#37474f" strokeWidth="2.800" />
                  </Ico>
                </span>
                Ca...en
              </button>
            </div>
            <ParcelTable />
            <div className="mt-[9px] flex w-[426px] justify-between">
              <button className={pager}>&lt;&lt;</button>
              <button className={pager}>&lt;</button>
              <div className="h-[30px] w-[191px] rounded-[3px] border border-[#adadad] bg-[#efefef] text-center text-[15.500px] leading-[29px] text-[#858585]">21 - 40 dari 1492</div>
              <button className={pager}>&gt;</button>
              <button className={pager}>&gt;&gt;</button>
            </div>
          </div>
        </div>
      </div>
    </section>
  );
}

/* ---------- status bar ---------- */

function Spin({ value, cls }: { value: string; cls: string }) {
  return (
    <div className={`flex h-[29px] overflow-hidden rounded-[3px] border border-[#adadad] bg-white text-[15.700px] leading-[28px] ${cls}`}>
      <span className="flex-1 pl-[4px] whitespace-nowrap">{value}</span>
      <div className="flex w-[21px] flex-col items-center justify-center gap-[5px] border-l border-[#adadad] bg-gradient-to-b from-[#fdfdfd] to-[#ededed]">
        <Tri up />
        <Tri />
      </div>
    </div>
  );
}

function StatusBar() {
  return (
    <footer className="flex h-[36px] shrink-0 items-center pt-[1px] text-[15px] whitespace-nowrap">
      <div className="ml-[4px] flex h-[30px] w-[291px] items-center rounded-[3px] border border-[#adadad] bg-white text-[15.900px] text-[#7f7f7f]">
        <Ico w={19} h={20} cls="ml-[11px]">
          <circle cx="7.800" cy="7.800" r="6.800" stroke="#8a8a8a" strokeWidth="1.700" />
          <path d="m12.800 12.800 5.500 5.700" stroke="#8a8a8a" strokeWidth="2.400" />
        </Ico>
        <span className="ml-[8px]">Type to locate (Ctrl+K)</span>
      </div>
      <span className="ml-[520px] w-[80px]">Coordinate</span>
      <div className="h-[29px] w-[162px] rounded-[3px] border border-[#adadad] bg-white pl-[6px] text-[16px] leading-[28px]">-764920,1 784385,9</div>
      <Ico w={24} h={26} cls="-mt-[2px] ml-[4px]">
        <ellipse cx="7.500" cy="8" rx="6" ry="7.500" transform="rotate(-25 7.500 8)" fill="#111" />
        <path d="M6 3.500 9 12M9.500 2.500 12 10" stroke="#fff" strokeWidth="1.700" />
        <ellipse cx="15.500" cy="19" rx="7.500" ry="6" fill="#d8cfcf" />
        <ellipse cx="13.500" cy="18" rx="6.500" ry="6.500" fill="#fff" stroke="#111" strokeWidth="2" />
        <circle cx="13.500" cy="18.500" r="2.400" fill="#111" />
        <circle cx="14" cy="18" r=".8" fill="#fff" />
        <path d="M3 17q4 0 8-6M14 9l5-3M16 12l5-7M0 16h3" stroke="#111" strokeWidth="1.500" strokeDasharray="2 1.500" />
        <path d="M5 18q2 6 8 6.500" stroke="#111" strokeWidth="1.600" />
      </Ico>
      <span className="ml-[13px] w-[39px]">Scale</span>
      <div className="flex h-[27px] w-[113px] overflow-hidden rounded-[3px] border border-[#adadad] bg-white text-[15.700px] leading-[26px]">
        <span className="flex-1 pl-[4px]">1:1725</span>
        <div className="flex w-[29px] items-center bg-gradient-to-b from-[#fbfbfb] to-[#ededed] pl-[8px]"><Tri /></div>
      </div>
      <Ico w={19} h={23} cls="ml-[13px]">
        <path d="M4 11V7a5.500 5.500 0 0 1 11 0v4" stroke="#8b8b8b" strokeWidth="1.900" />
        <rect y="10.500" width="18.500" height="12" rx="1.500" fill="#686868" />
      </Ico>
      <span className="ml-[9px] w-[69px] tracking-[-0.150px]">Magnifier</span>
      <Spin value="100%" cls="w-[108px]" />
      <span className="ml-[10px] w-[67px] tracking-[-0.100px]">Rotation</span>
      <Spin value="0,0 °" cls="w-[101px]" />
      <div className="ml-[7px] h-[21px] w-[21px] border border-[#bdbdbd] bg-white"><Check /></div>
      <span className="ml-[8px] w-[65px]">Render</span>
      <Ico w={23} h={21}>
        <path d="M1 8.500 6 1.500h11l5 7-1 2.500q-1.500 8-9.500 9T2 11z" stroke="#777" strokeWidth="1.300" fill="#e2e2e2" />
        <path d="M1 8.500h21M3 14h17M6 1.500Q6 14 11.500 20 17 14 17 1.500M11.500 1v19M4 5h15M7 18h9" stroke="#777" strokeWidth="1.200" />
      </Ico>
      <span className="ml-[2px] w-[117px] text-[15.900px]">EPSG:23844</span>
      <Ico w={24} h={23}>
        <path d="M12 .5c6.500 0 12 4 12 9.500 0 3-1.500 5.500-3.500 7 .3 2.500 1 4 2 5.500-2.500-.3-5-1.500-6.500-3.500-1 .3-2.500.5-4 .5-6.500 0-12-4-12-9.500S5.500.5 12 .5z" fill="#666" />
        <circle cx="6.500" cy="10" r="1.600" fill="#fff" /><circle cx="12" cy="10" r="1.600" fill="#fff" /><circle cx="17.500" cy="10" r="1.600" fill="#fff" />
      </Ico>
    </footer>
  );
}

export default function App() {
  return (
    <div className="flex h-[894px] w-[1920px] flex-col overflow-hidden bg-[#efefef] font-['Noto_Sans',sans-serif] text-black">
      <TopBar />
      <div className="flex h-[790px] shrink-0">
        <LeftTools />
        <LayersDock />
        <div className="w-[9px] shrink-0 pt-[389px] pl-[5px]">
          <Ico w={3} h={18}>
            <path d="M1 0v18" stroke="#aaa" strokeDasharray="1 2" />
          </Ico>
        </div>
        <MapCanvas />
        <RightDock />
      </div>
      <StatusBar />
      <div className="h-[2px] bg-[#3d4152]" />
    </div>
  );
}
